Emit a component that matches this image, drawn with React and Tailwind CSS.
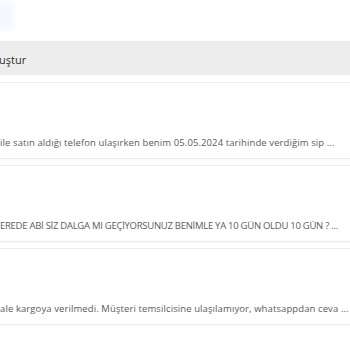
import React from 'react';

const complaints = [
  { text: 'ile satın aldığı telefon ulaşırken benim 05.05.2024 tarihinde verdiğim sip ...', tracking: 'tracking-[0.1px]' },
  { text: 'EREDE ABİ SİZ DALGA MI GEÇİYORSUNUZ BENİMLE YA 10 GÜN OLDU 10 GÜN ? ...', tracking: 'tracking-[-0.27px]' },
  { text: 'ale kargoya verilmedi. Müşteri temsilcisine ulaşılamıyor, whatsappdan ceva ...', tracking: 'tracking-[0.1px]' },
];

export default function App() {
  return (
    <div className="w-[350px] h-[350px] overflow-hidden bg-white" style={{ fontFamily: '"Open Sans", sans-serif' }}>
      {/* top, button cut off on the left */}
      <div className="h-[41px] flex items-start">
        <div className="-ml-6 mt-[2px] h-[28px] w-[38px] rounded-md bg-[#f3f7fe] blur-[3px]" />
      </div>

      {/* section header */}
      <div className="h-[34px] bg-[#ededed] flex items-center">
        <span className="text-[11px] text-[#2f2f2f] -ml-[1px] pt-[4px]">uştur</span>
      </div>

      {/* complaint cards */}
      <div className="-mx-3 mt-[7px] flex flex-col gap-[6px]">
        {complaints.map((c, i) => (
          <div
            key={i}
            className="h-[77px] rounded border border-[#ececec] bg-white shadow-[0_1px_2px_rgba(0,0,0,0.03)] pl-[11px] pt-[54px]"
          >
            <p className={`text-[9.5px] leading-[12px] text-[#5c5c5c] whitespace-nowrap ${c.tracking}`}>{c.text}</p>
          </div>
        ))}
      </div>
    </div>
  );
}
